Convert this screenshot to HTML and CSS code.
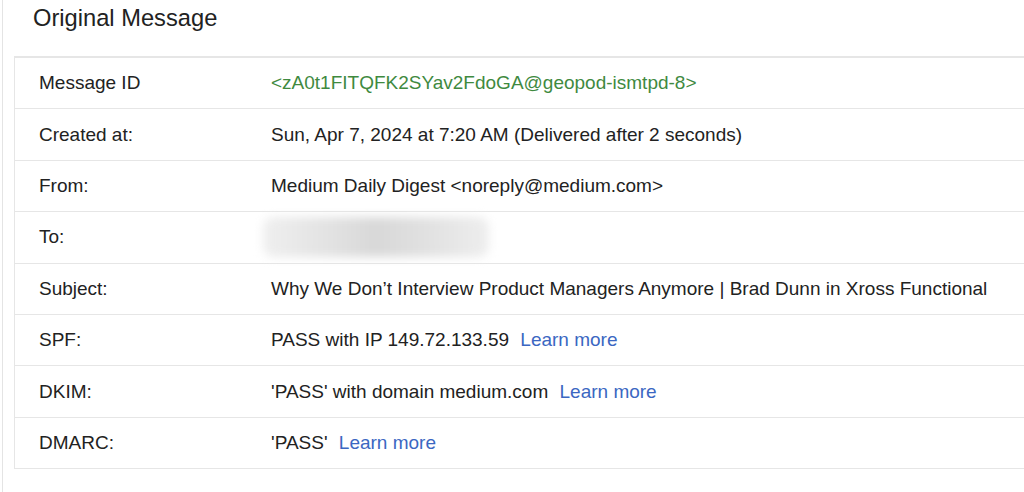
FILE: index.html
```html
<!DOCTYPE html>
<html>
<head>
<meta charset="utf-8">
<link rel="stylesheet" href="styles.css">
</head>
<body>
<div class="page">
  <h1 class="title">Original Message</h1>
  <div class="table">
    <div class="row"><div class="label">Message ID</div><div class="value green">&lt;zA0t1FITQFK2SYav2FdoGA@geopod-ismtpd-8&gt;</div></div>
    <div class="row"><div class="label">Created at:</div><div class="value">Sun, Apr 7, 2024 at 7:20 AM (Delivered after 2 seconds)</div></div>
    <div class="row"><div class="label">From:</div><div class="value">Medium Daily Digest &lt;noreply@medium.com&gt;</div></div>
    <div class="row"><div class="label">To:</div><div class="value"><div class="blur"></div></div></div>
    <div class="row"><div class="label">Subject:</div><div class="value">Why We Don’t Interview Product Managers Anymore | Brad Dunn in Xross Functional</div></div>
    <div class="row"><div class="label">SPF:</div><div class="value">PASS with IP 149.72.133.59 <a class="link">Learn more</a></div></div>
    <div class="row"><div class="label">DKIM:</div><div class="value">'PASS' with domain medium.com <a class="link">Learn more</a></div></div>
    <div class="row"><div class="label">DMARC:</div><div class="value">'PASS' <a class="link">Learn more</a></div></div>
  </div>
</div>
</body>
</html>
```
FILE: styles.css
```css
html, body { margin: 0; padding: 0; background: #fff; }
body { font-family: "Liberation Sans", Arial, sans-serif; color: #222; }
.page {
  margin-left: 2px;
  border-left: 1px solid #e4e4e4;
  padding-left: 11px;
  min-height: 492px;
  box-sizing: border-box;
}
.title {
  margin: 0;
  padding: 4px 0 0 19px;
  height: 56px;
  box-sizing: border-box;
  font-size: 23.7px;
  line-height: 28px;
  font-weight: normal;
  color: #222;
}
.table {
  border-top: 2px solid #e6e6e6;
  border-left: 1px solid #e6e6e6;
}
.row {
  display: flex;
  align-items: center;
  height: 51.4px;
  border-bottom: 1px solid #e6e6e6;
  box-sizing: border-box;
  font-size: 19px;
}
.label { width: 232px; padding-left: 24px; flex: none; box-sizing: content-box; }
.value { flex: 1; white-space: nowrap; }
.green { color: #3f8a3f; }
.link { color: #3b67c2; margin-left: 6px; }
.blur {
  width: 226px;
  height: 40px;
  margin-left: -8px;
  border-radius: 10px;
  background: linear-gradient(90deg, #efefef 0%, #e2e2e2 30%, #d8d8d8 50%, #e2e2e2 75%, #eeeeee 100%);
  filter: blur(5px);
}
```
